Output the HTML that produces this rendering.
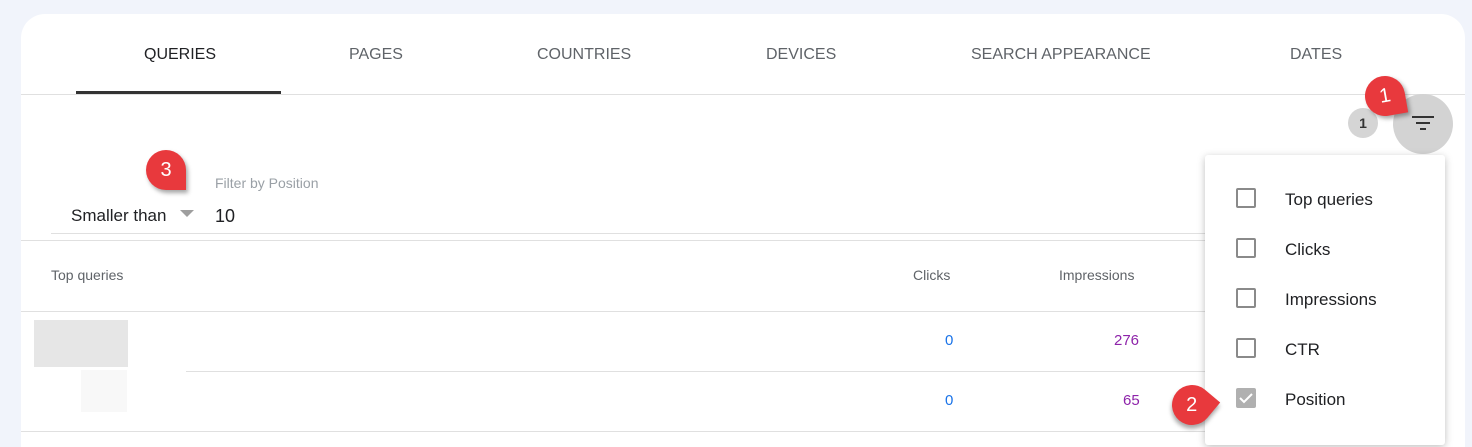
<!DOCTYPE html><html style="overflow:hidden;height:447px"><head><style>
body{margin:0;width:1472px;height:447px;background:#f1f4fb;font-family:"Liberation Sans",sans-serif;overflow:hidden;position:relative}
.card{position:absolute;left:21px;top:14px;width:1444px;height:433px;background:#fff;border-radius:24px 24px 0 0}
.a{position:absolute;white-space:nowrap}
.tab{top:46px;font-size:16px;color:#5f6368}
.hl{position:absolute;height:1px;background:#e0e0e0}
.cb{position:absolute;left:1236px;width:20px;height:20px;border:2px solid #8a8a8a;border-radius:2px;box-sizing:border-box}
.mt{left:1285px;font-size:17px;color:#202124}
.pin{position:absolute;width:40px;height:40px;background:#e8393d;border-radius:50% 50% 50% 50%;box-shadow:2px 3px 4px rgba(0,0,0,.35)}
.pin span{position:absolute;left:0;right:0;top:9px;text-align:center;color:#fff;font-size:20px}
</style></head><body>
<div class="card"></div>
<div class="a tab" style="left:144px;color:#202124">QUERIES</div>
<div class="a tab" style="left:349px">PAGES</div>
<div class="a tab" style="left:537px">COUNTRIES</div>
<div class="a tab" style="left:766px">DEVICES</div>
<div class="a tab" style="left:971px">SEARCH APPEARANCE</div>
<div class="a tab" style="left:1290px">DATES</div>
<div style="position:absolute;left:76px;top:91px;width:205px;height:3px;background:#333"></div>
<div class="hl" style="left:21px;top:94px;width:1444px"></div>
<div class="a" style="left:1348px;top:108px;width:30px;height:30px;border-radius:50%;background:#d5d5d5;font-size:14px;font-weight:bold;text-align:center;line-height:30px;color:#333">1</div>
<div class="a" style="left:1393px;top:94px;width:60px;height:60px;border-radius:50%;background:#d3d3d3"></div>
<div class="a" style="left:1412px;top:116px;width:22px;height:2px;background:#333"></div>
<div class="a" style="left:1416px;top:122px;width:14px;height:2px;background:#333"></div>
<div class="a" style="left:1420px;top:128px;width:6px;height:2px;background:#333"></div>
<div class="a" style="left:215px;top:175px;font-size:14px;color:#9aa0a6">Filter by Position</div>
<div class="a" style="left:71px;top:206px;font-size:17px;color:#202124">Smaller than</div>
<div class="a" style="left:180px;top:210px;width:0;height:0;border-left:7px solid transparent;border-right:7px solid transparent;border-top:7px solid #9e9e9e"></div>
<div class="a" style="left:215px;top:206px;font-size:18px;color:#202124">10</div>
<div class="hl" style="left:51px;top:233px;width:1160px"></div>
<div class="hl" style="left:21px;top:240px;width:1190px"></div>
<div class="a" style="left:51px;top:267px;font-size:14px;color:#5f6368">Top queries</div>
<div class="a" style="left:913px;top:267px;font-size:14px;color:#5f6368">Clicks</div>
<div class="a" style="left:1059px;top:267px;font-size:14px;color:#5f6368">Impressions</div>
<div class="hl" style="left:21px;top:311px;width:1190px"></div>
<div class="a" style="left:34px;top:320px;width:94px;height:47px;background:#e6e6e6"></div>
<div class="a" style="left:81px;top:370px;width:46px;height:42px;background:#f8f8f8"></div>
<div class="hl" style="left:186px;top:371px;width:1025px"></div>
<div class="a" style="left:945px;top:332px;font-size:15px;color:#1a73e8">0</div>
<div class="a" style="left:1114px;top:332px;font-size:15px;color:#8e24aa">276</div>
<div class="a" style="left:945px;top:392px;font-size:15px;color:#1a73e8">0</div>
<div class="a" style="left:1123px;top:392px;font-size:15px;color:#8e24aa">65</div>
<div class="hl" style="left:21px;top:431px;width:1190px"></div>
<div class="a" style="left:1205px;top:155px;width:240px;height:290px;background:#fff;box-shadow:0 2px 8px rgba(0,0,0,.25);border-radius:3px"></div>
<div class="cb" style="top:188px"></div><div class="a mt" style="top:190px">Top queries</div>
<div class="cb" style="top:238px"></div><div class="a mt" style="top:240px">Clicks</div>
<div class="cb" style="top:288px"></div><div class="a mt" style="top:290px">Impressions</div>
<div class="cb" style="top:338px"></div><div class="a mt" style="top:340px">CTR</div>
<div class="cb" style="top:388px;background:#b0b0b0;border-color:#b0b0b0"></div>
<svg class="a" style="left:1236px;top:388px" width="20" height="20"><path d="M4 10l4 4 8-8" stroke="#fff" stroke-width="2" fill="none"/></svg>
<div class="a mt" style="top:390px">Position</div>
<div class="pin" style="left:1365px;top:76px;border-radius:50% 50% 0 50%;transform:rotate(-10deg)"><span>1</span></div>
<div class="pin" style="left:1172px;top:385px;border-radius:50% 0 50% 50%;transform:rotate(40deg)"><span style="transform:rotate(-40deg)">2</span></div>
<div class="pin" style="left:146px;top:150px;border-radius:50% 50% 0 50%"><span>3</span></div>
</body></html>
